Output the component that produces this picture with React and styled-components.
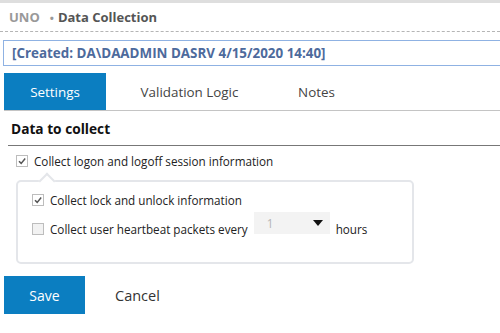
import React from 'react'
import styled, { createGlobalStyle } from 'styled-components'

const Global = createGlobalStyle`
  html, body { margin: 0; padding: 0; background: #fff; }
  body { font-family: "Open Sans", "Noto Sans", sans-serif; color: #222; }
  * { box-sizing: border-box; }
`

function Check({ checked }) {
  return (
    <Box checked={checked}>
      {checked && (
        <svg width="10" height="10" viewBox="0 0 10 10">
          <path d="M2 5.2 L4.2 7.4 L8.2 2.6" fill="none" stroke="#555" strokeWidth="1.5" />
        </svg>
      )}
    </Box>
  )
}

export default function App() {
  return (
    <Page>
      <Global />
      <Header>
        <Crumb>UNO</Crumb>
        <Dot>•</Dot>
        <Title>Data Collection</Title>
      </Header>
      <CreatedBox>[Created: DA\DAADMIN DASRV 4/15/2020 14:40]</CreatedBox>
      <Tabs>
        <Tab active w={102}>Settings</Tab>
        <Tab w={167}>Validation Logic</Tab>
        <Tab w={87}>Notes</Tab>
      </Tabs>
      <Section>
        <SectionTitle>Data to collect</SectionTitle>
        <Row>
          <Check checked />
          <Label>Collect logon and logoff session information</Label>
        </Row>
        <SubPanel>
          <Row>
            <Check checked />
            <Label>Collect lock and unlock information</Label>
          </Row>
          <Row>
            <Check />
            <Label>Collect user heartbeat packets every</Label>
            <Select>
              <span>1</span>
              <svg width="10" height="6" viewBox="0 0 10 6">
                <path d="M0 0 L10 0 L5 6 Z" fill="#111" />
              </svg>
            </Select>
            <Label>hours</Label>
          </Row>
        </SubPanel>
      </Section>
      <Actions>
        <PrimaryButton>Save</PrimaryButton>
        <TextButton>Cancel</TextButton>
      </Actions>
    </Page>
  )
}

const Page = styled.div`
  width: 500px;
  height: 333px;
  overflow: hidden;
  border-top: 3px solid #dedede;
`

const Header = styled.div`
  display: flex;
  align-items: center;
  height: 29px;
  padding-left: 9px;
  border-bottom: 1px dashed #b5b5b5;
  font-size: 13px;
  font-weight: 700;
`
const Crumb = styled.span`
  color: #999;
`
const Dot = styled.span`
  color: #999;
  margin: 0 4px 0 10px;
  font-size: 11px;
`
const Title = styled.span`
  color: #555;
`

const CreatedBox = styled.div`
  margin: 8px 0 0 3px;
  width: 520px;
  height: 26px;
  border: 1px solid #8fb2e3;
  padding-left: 8px;
  display: flex;
  align-items: center;
  color: #4d6a9c;
  font-weight: 700;
  font-size: 13.4px;
  white-space: nowrap;
`

const Tabs = styled.div`
  display: flex;
  margin: 7px 0 0 4px;
  height: 38px;
  border-bottom: 1px solid #c4c4c4;
`
const Tab = styled.div`
  width: ${p => p.w}px;
  display: flex;
  align-items: center;
  justify-content: center;
  font-size: 13.4px;
  color: ${p => (p.active ? '#fff' : '#444')};
  background: ${p => (p.active ? '#0b7ec1' : 'transparent')};
`

const Section = styled.div`
  padding: 0 0 0 8px;
`
const SectionTitle = styled.div`
  height: 35px;
  padding: 8px 0 0 3px;
  font-size: 13.7px;
  font-weight: 700;
  color: #111;
  border-bottom: 1px solid #777;
`

const Row = styled.div`
  display: flex;
  align-items: center;
  height: 29px;
  padding-left: 8px;
  gap: 6px;
`

const Box = styled.span`
  width: 12px;
  height: 12px;
  border: 1px solid #bdbdbd;
  background: ${p => (p.checked ? '#fff' : '#f2f2f2')};
  display: flex;
  align-items: center;
  justify-content: center;
  flex-shrink: 0;
`

const Label = styled.span`
  font-size: 11.7px;
  color: #222;
`

const SubPanel = styled.div`
  position: relative;
  margin: 5px 0 0 8px;
  width: 398px;
  height: 84px;
  border: 2px solid #e4e6ea;
  border-radius: 5px;
  padding: 3px 0 0 6px;
  &::before {
    content: '';
    position: absolute;
    top: -7px;
    left: 23px;
    width: 10px;
    height: 10px;
    background: #fff;
    border-left: 2px solid #e4e6ea;
    border-top: 2px solid #e4e6ea;
    transform: rotate(45deg);
  }
`

const Select = styled.div`
  align-self: flex-start;
  width: 76px;
  height: 22px;
  background: #f3f3f3;
  display: flex;
  align-items: center;
  justify-content: space-between;
  padding: 0 7px 0 13px;
  margin: -2px 0 0 0;
  font-size: 11.7px;
  color: #b5b5b5;
`

const Actions = styled.div`
  display: flex;
  align-items: center;
  margin: 12px 0 0 4px;
`
const PrimaryButton = styled.div`
  width: 81px;
  height: 38px;
  background: #0b7ec1;
  color: #fff;
  font-size: 14px;
  display: flex;
  align-items: center;
  justify-content: center;
`
const TextButton = styled.div`
  margin-left: 30px;
  font-size: 14.5px;
  color: #333;
`
